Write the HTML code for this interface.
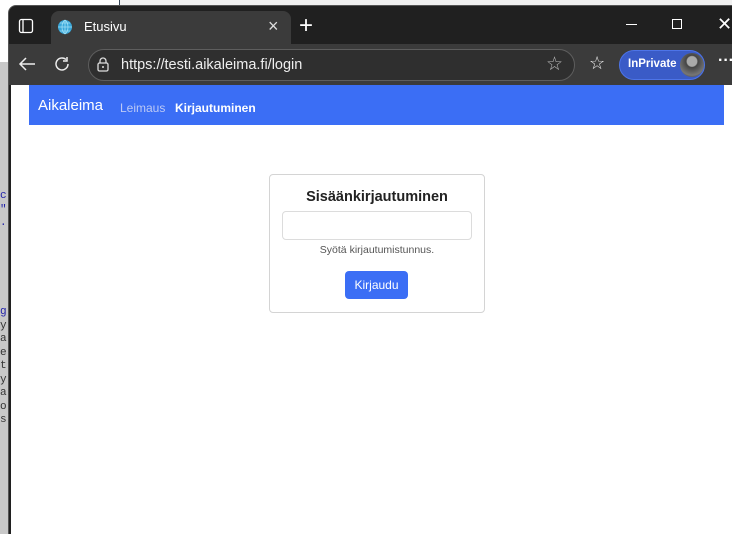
<!DOCTYPE html>
<html><head><style>
*{margin:0;padding:0;box-sizing:border-box}
html,body{width:732px;height:534px;overflow:hidden}
body{background:#f0f0f0;font-family:"Liberation Sans",sans-serif;position:relative}
.abs{position:absolute}
</style></head><body>
<div class="abs" style="left:0;top:0;width:120px;height:62px;background:#fff"></div>
<div class="abs" style="left:119px;top:0;width:1px;height:6px;background:#345"></div>
<div class="abs" style="left:0;top:62px;width:8px;height:472px;background:#c8c8c8"></div>
<div class="abs" style="left:0;top:190px;font:11px 'Liberation Mono',monospace;line-height:13.5px;color:#22a;width:8px;overflow:hidden">c<br>"<br>.</div>
<div class="abs" style="left:0;top:306px;font:11px 'Liberation Mono',monospace;line-height:13.5px;color:#333;width:8px;overflow:hidden"><span style="color:#22a">g</span><br>y<br>a<br>e<br>t<br>y<br>a<br>o<br>s</div>
<!-- window -->
<div class="abs" style="left:8px;top:5px;width:724px;height:529px;background:#202020;border-radius:8px 0 0 0;border-left:1px solid #555;border-top:1px solid #555"></div>
<!-- tab -->
<div class="abs" style="left:51px;top:11px;width:240px;height:34px;background:#3b3b3b;border-radius:8px 8px 0 0"></div>
<svg class="abs" style="left:18px;top:18px" width="16" height="16"><rect x="1.5" y="1.5" width="13" height="13" rx="2" fill="none" stroke="#fff" stroke-width="1.3"/><line x1="5" y1="1.5" x2="5" y2="14.5" stroke="#fff" stroke-width="1.3"/></svg>
<svg class="abs" style="left:57px;top:19px" width="16" height="16"><circle cx="8" cy="8" r="7" fill="#3aa7d9"/><path d="M1 8h14M8 1v14M3 4h10M3 12h10M8 1c-4 3-4 11 0 14M8 1c4 3 4 11 0 14" stroke="#9ee0f5" stroke-width="0.8" fill="none"/></svg>
<div class="abs" style="left:84px;top:19px;color:#fff;font-size:13px">Etusivu</div>
<div class="abs" style="left:268px;top:16px;color:#ddd;font-size:18px">×</div>
<div class="abs" style="left:299px;top:12px;color:#fff;font-size:24px;font-weight:300">+</div>
<div class="abs" style="left:626px;top:24px;width:11px;height:1px;background:#fff"></div>
<div class="abs" style="left:672px;top:19px;width:10px;height:10px;border:1px solid #fff"></div>
<div class="abs" style="left:717px;top:14px;color:#fff;font-size:18px">✕</div>
<!-- toolbar -->
<div class="abs" style="left:9px;top:44px;width:723px;height:41px;background:#3b3b3b"></div>
<svg class="abs" style="left:18px;top:55px" width="18" height="18"><path d="M17 9H2M8 3L2 9l6 6" fill="none" stroke="#eee" stroke-width="1.5"/></svg>
<svg class="abs" style="left:53px;top:55px" width="18" height="18"><path d="M15 9a6 6 0 1 1-2-4.5" fill="none" stroke="#eee" stroke-width="1.5"/><path d="M14 2v4h-4" fill="none" stroke="#eee" stroke-width="1.5"/></svg>
<div class="abs" style="left:88px;top:49px;width:487px;height:32px;border:1px solid #5e5e5e;border-radius:16px;background:#2f2f2f"></div>
<svg class="abs" style="left:96px;top:57px" width="14" height="16"><rect x="2" y="6" width="10" height="8" rx="1.5" fill="none" stroke="#ddd" stroke-width="1.3"/><path d="M4 6V4a3 3 0 0 1 6 0v2" fill="none" stroke="#ddd" stroke-width="1.3"/><circle cx="7" cy="10" r="1" fill="#ddd"/></svg>
<div class="abs" style="left:121px;top:57px;color:#eee;font-size:14.5px">https://testi.aikaleima.fi/login</div>
<div class="abs" style="left:546px;top:53px;color:#bbb;font-size:19px">☆</div>
<div class="abs" style="left:589px;top:53px;color:#eee;font-size:18px">☆</div>
<div class="abs" style="left:619px;top:50px;width:86px;height:30px;border-radius:15px;background:#3a5bc7;border:1px solid #4d74e8"></div>
<div class="abs" style="left:628px;top:58px;color:#fff;font-size:11.5px;font-weight:bold">InPrivate</div>
<div class="abs" style="left:680px;top:53px;width:24px;height:24px;border-radius:12px;background:radial-gradient(circle at 50% 35%,#aaa 25%,#444 30%,#777 70%,#222)"></div>
<div class="abs" style="left:718px;top:52px;color:#fff;font-size:16px;font-weight:bold">···</div>
<!-- content -->
<div class="abs" style="left:11px;top:85px;width:721px;height:449px;background:#fff"></div>
<div class="abs" style="left:29px;top:85px;width:695px;height:40px;background:#3b6ef5"></div>
<div class="abs" style="left:38px;top:97px;color:#fff;font-size:15px">Aikaleima</div>
<div class="abs" style="left:120px;top:101px;color:#bcc9f5;font-size:12px">Leimaus</div>
<div class="abs" style="left:175px;top:101px;color:#fff;font-size:12px;font-weight:bold">Kirjautuminen</div>
<div class="abs" style="left:269px;top:174px;width:216px;height:139px;border:1px solid #d4d4d4;border-radius:4px"></div>
<div class="abs" style="left:269px;top:189px;width:216px;text-align:center;font-size:14.5px;color:#222;font-weight:bold">Sisäänkirjautuminen</div>
<div class="abs" style="left:282px;top:211px;width:190px;height:29px;border:1px solid #dcdcdc;border-radius:4px"></div>
<div class="abs" style="left:269px;top:244px;width:216px;text-align:center;font-size:10.5px;color:#555">Syötä kirjautumistunnus.</div>
<div class="abs" style="left:345px;top:271px;width:63px;height:28px;background:#3b6ef5;border-radius:4px;color:#fff;font-size:12px;text-align:center;line-height:28px">Kirjaudu</div>
</body></html>
